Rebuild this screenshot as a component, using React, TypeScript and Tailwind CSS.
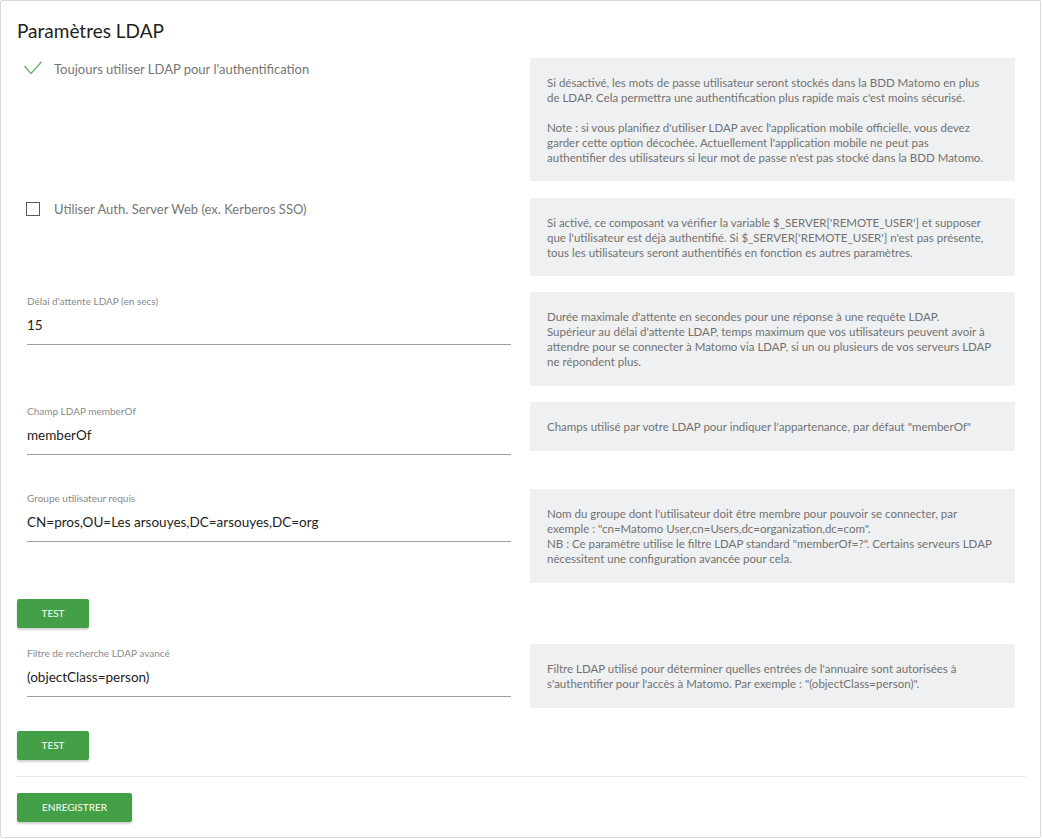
import React from "react";

const font = { fontFamily: "Lato, 'Noto Sans', sans-serif" };

function Help({ lines, pb = "pb-[17px]" }: { lines: (string | null)[]; pb?: string }) {
  return (
    <div className={`ml-[9px] w-[485px] bg-[#eff0f1] px-[17px] pt-[17px] ${pb} text-[11.5px] leading-[15px] text-[#727272] whitespace-nowrap`}>
      {lines.map((l, i) => (
        <div key={i} className="h-[15px]">{l ?? "\u00a0"}</div>
      ))}
    </div>
  );
}

function Field({ label, value }: { label: string; value: string }) {
  return (
    <div className="px-[10px] pt-[3px] pb-[18px]">
      <div className="text-[10px] leading-[12px] text-[#8a8a8a]">{label}</div>
      <div className="mt-[8px] h-[30px] border-b border-[#9e9e9e] text-[13.5px] leading-[20px] text-[#222]">{value}</div>
    </div>
  );
}

function Btn({ children, w }: { children: React.ReactNode; w: string }) {
  return (
    <div className={`${w} h-[29px] rounded-[2px] bg-[#43a047] shadow-[0_2px_2px_rgba(0,0,0,0.18)] flex items-center justify-center text-[10px] text-white`}>
      {children}
    </div>
  );
}

function Row({ left, right, mb = "mb-[16px]" }: { left: React.ReactNode; right: React.ReactNode; mb?: string }) {
  return (
    <div className={`flex items-start ${mb}`}>
      <div className="w-[504px]">{left}</div>
      <div className="w-[504px]">{right}</div>
    </div>
  );
}

export default function App() {
  return (
    <div style={font} className="w-[1041px] h-[839px] bg-white">
      <div className="h-[838px] border border-[#d9d9d9] rounded-[2px] pl-[16px] pr-[14px] pt-[17px]">
        <h2 className="h-[26px] text-[19px] leading-[26px] text-[#222] mb-[14px]">Paramètres LDAP</h2>

        <Row
          mb="mb-[17px]"
          left={
            <div className="flex items-center pt-[1px] h-[20px]">
              <svg width="20" height="16" viewBox="0 0 20 16" className="ml-[6px] mr-[11px]">
                <polyline points="1.5,5 8,12.5 18.5,0.8" fill="none" stroke="#6cb46f" strokeWidth="1.4" />
              </svg>
              <span className="text-[13px] leading-[18px] text-[#767676]">Toujours utiliser LDAP pour l'authentification</span>
            </div>
          }
          right={
            <Help
              pb="pb-[16px]"
              lines={[
                "Si désactivé, les mots de passe utilisateur seront stockés dans la BDD Matomo en plus",
                "de LDAP. Cela permettra une authentification plus rapide mais c'est moins sécurisé.",
                null,
                "Note : si vous planifiez d'utiliser LDAP avec l'application mobile officielle, vous devez",
                "garder cette option décochée. Actuellement l'application mobile ne peut pas",
                "authentifier des utilisateurs si leur mot de passe n'est pas stocké dans la BDD Matomo.",
              ]}
            />
          }
        />

        <Row
          left={
            <div className="flex items-center pt-[1px] h-[20px]">
              <div className="ml-[9px] mr-[14px] w-[14px] h-[14px] border-[1.5px] border-[#5a5a5a]" />
              <span className="text-[13px] leading-[18px] text-[#767676]">Utiliser Auth. Server Web (ex. Kerberos SSO)</span>
            </div>
          }
          right={
            <Help
              pb="pb-[16px]"
              lines={[
                "Si activé, ce composant va vérifier la variable $_SERVER['REMOTE_USER'] et supposer",
                "que l'utilisateur est déjà authentifié. Si $_SERVER['REMOTE_USER'] n'est pas présente,",
                "tous les utilisateurs seront authentifiés en fonction es autres paramètres.",
              ]}
            />
          }
        />

        <Row
          left={<Field label="Délai d'attente LDAP (en secs)" value="15" />}
          right={
            <Help
              lines={[
                "Durée maximale d'attente en secondes pour une réponse à une requête LDAP.",
                "Supérieur au délai d'attente LDAP, temps maximum que vos utilisateurs peuvent avoir à",
                "attendre pour se connecter à Matomo via LDAP, si un ou plusieurs de vos serveurs LDAP",
                "ne répondent plus.",
              ]}
            />
          }
        />

        <Row
          left={<Field label="Champ LDAP memberOf" value="memberOf" />}
          right={<Help lines={['Champs utilisé par votre LDAP pour indiquer l\'appartenance, par défaut "memberOf"']} />}
        />

        <Row
          left={<Field label="Groupe utilisateur requis" value="CN=pros,OU=Les arsouyes,DC=arsouyes,DC=org" />}
          right={
            <Help
              lines={[
                "Nom du groupe dont l'utilisateur doit être membre pour pouvoir se connecter, par",
                'exemple : "cn=Matomo User,cn=Users,dc=organization,dc=com".',
                'NB : Ce paramètre utilise le filtre LDAP standard "memberOf=?". Certains serveurs LDAP',
                "nécessitent une configuration avancée pour cela.",
              ]}
            />
          }
        />

        <div className="mb-[16px]">
          <Btn w="w-[72px]">TEST</Btn>
        </div>

        <Row
          left={<Field label="Filtre de recherche LDAP avancé" value="(objectClass=person)" />}
          right={
            <Help
              lines={[
                "Filtre LDAP utilisé pour déterminer quelles entrées de l'annuaire sont autorisées à",
                's\'authentifier pour l\'accès à Matomo. Par exemple : "(objectClass=person)".',
              ]}
            />
          }
        />

        <div className="mb-[16px]">
          <Btn w="w-[72px]">TEST</Btn>
        </div>

        <div className="border-t border-[#e8e8e8] mb-[16px]" />

        <Btn w="w-[115px]">ENREGISTRER</Btn>
      </div>
    </div>
  );
}
